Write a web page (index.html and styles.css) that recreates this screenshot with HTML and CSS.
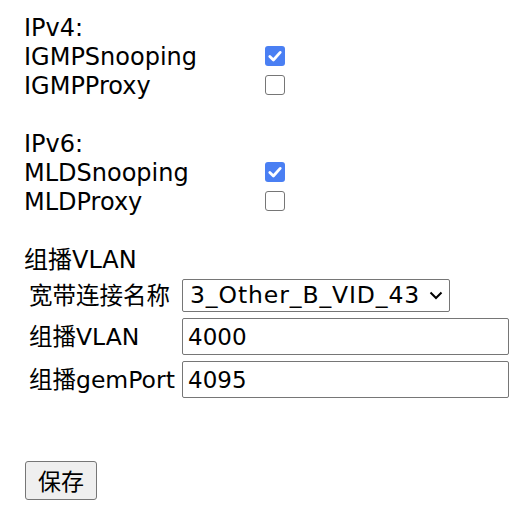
FILE: index.html
```html
<!DOCTYPE html>
<html>
<head>
<meta charset="utf-8">
<link rel="stylesheet" href="styles.css">
</head>
<body>
<div class="page">
  <div class="row"><span class="label">IPv4:</span></div>
  <div class="row"><span class="label">IGMPSnooping</span><span class="box checked"><svg viewBox="0 0 20 20" width="20" height="20"><path d="M4.8 10.4 L8.4 14 L15.2 6.4" fill="none" stroke="#fff" stroke-width="2.8" stroke-linecap="round" stroke-linejoin="round"/></svg></span></div>
  <div class="row"><span class="label">IGMPProxy</span><span class="box"></span></div>
  <div class="row"></div>
  <div class="row"><span class="label">IPv6:</span></div>
  <div class="row"><span class="label">MLDSnooping</span><span class="box checked"><svg viewBox="0 0 20 20" width="20" height="20"><path d="M4.8 10.4 L8.4 14 L15.2 6.4" fill="none" stroke="#fff" stroke-width="2.8" stroke-linecap="round" stroke-linejoin="round"/></svg></span></div>
  <div class="row"><span class="label">MLDProxy</span><span class="box"></span></div>
  <div class="row"></div>
  <div class="row"><span class="label">组播VLAN</span></div>
  <div class="form">
    <span class="flabel">宽带连接名称</span>
    <div class="select"><span class="select-text">3_Other_B_VID_43</span><svg class="chev" viewBox="0 0 14 9" width="14" height="9"><path d="M1.5 1.5 L7 7 L12.5 1.5" fill="none" stroke="#000" stroke-width="2"/></svg></div>
    <span class="flabel">组播VLAN</span>
    <input class="text" type="text" value="4000">
    <span class="flabel">组播gemPort</span>
    <input class="text" type="text" value="4095">
  </div>
  <button class="save" type="button">保存</button>
</div>
</body>
</html>
```

FILE: styles.css
```css
html, body {
  margin: 0;
  padding: 0;
  background: #fff;
}
.page {
  padding: 14px 0 0 24px;
  font-family: "DejaVu Sans", "Noto Sans CJK SC", sans-serif;
  font-size: 24px;
  color: #000;
}
.row {
  display: grid;
  grid-template-columns: 241px 20px;
  align-items: center;
  height: 29px;
  line-height: 29px;
}
.label {
  white-space: nowrap;
}
.box {
  width: 18px;
  height: 18px;
  border: 1px solid #767676;
  border-radius: 3px;
  background: #fff;
  margin-top: -3px;
  display: block;
}
.box.checked {
  width: 20px;
  height: 20px;
  border: none;
  background: #4a7ff3;
}
.box svg {
  display: block;
}
.form {
  display: grid;
  grid-template-columns: 153px auto;
  row-gap: 6px;
  align-items: center;
  justify-items: start;
  margin-top: 4px;
  padding-left: 5px;
}
.flabel {
  font-family: "DejaVu Sans", "Noto Sans CJK SC", sans-serif;
  font-size: 23.5px;
  line-height: 30px;
  white-space: nowrap;
}
.select {
  box-sizing: border-box;
  width: 268px;
  height: 33px;
  border: 1px solid #767676;
  border-radius: 2px;
  display: flex;
  align-items: center;
  padding: 0 6px 0 7px;
  background: #fff;
}
.select-text {
  font-size: 23.5px;
  letter-spacing: 0.9px;
  line-height: 31px;
  white-space: nowrap;
}
.chev {
  display: block;
  margin-left: auto;
  flex: none;
}
.text {
  box-sizing: border-box;
  width: 327px;
  height: 37px;
  border: 1px solid #767676;
  border-radius: 2px;
  padding: 0 5px;
  font-family: "DejaVu Sans", sans-serif;
  font-size: 23px;
  color: #000;
  outline: none;
}
.save {
  display: block;
  margin-top: 63px;
  margin-left: 1px;
  box-sizing: border-box;
  width: 72px;
  height: 39px;
  border: 1px solid #767676;
  border-radius: 3px;
  background: #efefef;
  font-family: "Noto Sans CJK SC", sans-serif;
  font-size: 23px;
  color: #000;
  padding: 0;
  line-height: 37px;
}
```
